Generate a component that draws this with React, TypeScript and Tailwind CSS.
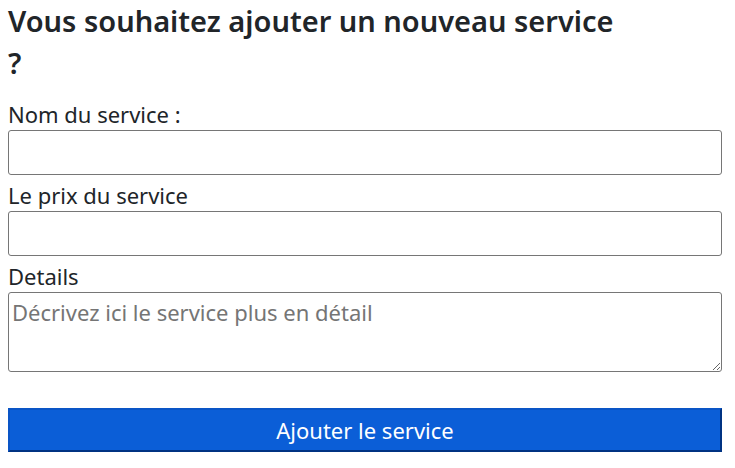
import React from 'react';

export default function App() {
  return (
    <div className="bg-white min-h-[468px] px-2 text-[#212529] font-['Noto_Sans',sans-serif]">
      <h3 className="text-[29px] leading-[42px] font-semibold m-0 w-[714px]">
        Vous souhaitez ajouter un nouveau service
        <br />?
      </h3>
      <form className="w-[714px] flex flex-col mt-[14px]" onSubmit={(e) => e.preventDefault()}>
        <label className="text-[22px] leading-[32px] block">Nom du service :</label>
        <input
          type="text"
          className="h-[45px] w-full border border-[#767676] rounded-[3px] px-1 text-[22px] outline-none"
        />
        <label className="text-[22px] leading-[32px] block mt-[4px]">Le prix du service</label>
        <input
          type="text"
          className="h-[45px] w-full border border-[#767676] rounded-[3px] px-1 text-[22px] outline-none"
        />
        <label className="text-[22px] leading-[32px] block mt-[4px]">Details</label>
        <textarea
          placeholder="Décrivez ici le service plus en détail"
          className="h-[80px] w-full border border-[#767676] rounded-[3px] px-[3px] pt-[5px] text-[22px] leading-[28px] outline-none placeholder:text-[#757575] resize-y"
        />
        <button
          type="submit"
          className="mt-[36px] h-[44px] w-full bg-[#0b5ed7] text-white text-[22px] border-2 border-t-[#0a55c6] border-l-[#0a55c6] border-b-[#003382] border-r-[#003382] leading-none"
        >
          Ajouter le service
        </button>
      </form>
    </div>
  );
}
